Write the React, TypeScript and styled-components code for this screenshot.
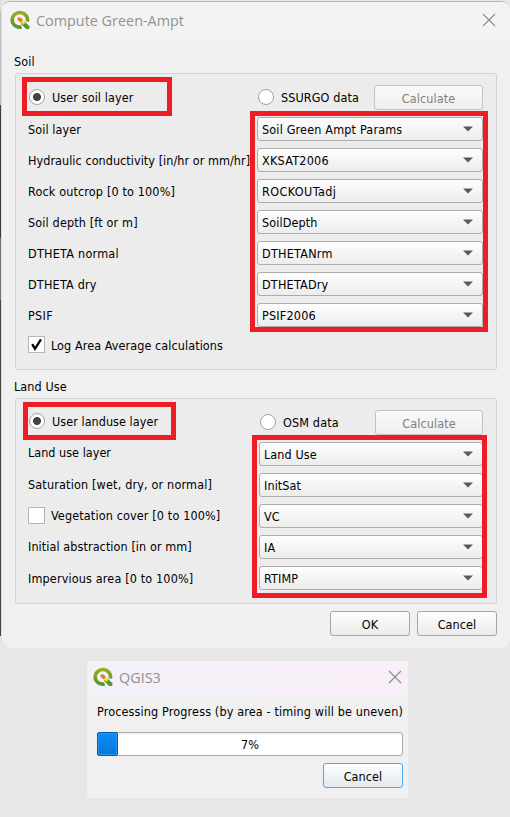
import React from 'react';
import styled, { createGlobalStyle } from 'styled-components';

const Global = createGlobalStyle`
  *, *::before, *::after { box-sizing: border-box; }
  body {
    margin: 0;
    background: #e7e7e7;
    font-family: "DejaVu Sans Condensed", "DejaVu Sans", sans-serif;
    font-size: 12.5px;
    line-height: 16px;
    color: #000;
  }
`;

const Desktop = styled.div`
  width: 510px;
  height: 817px;
  overflow: hidden;
  background: linear-gradient(#dcdcdc 0 12px, #bdbdbd 12px 105px, #3c3c3c 105px 238px, #777 238px 300px, #444 300px 636px, #e7e7e7 636px) 0 0 / 1px 100% no-repeat, #e7e7e7;
`;

const MainWindow = styled.div`
  height: 648px;
  margin: 0 0 0 1px;
  padding-top: 1px;
`;

const WindowBody = styled.div`
  display: flex;
  flex-direction: column;
  height: 647px;
  background: #f0f0f0;
  border-top: 1px solid #b4b4b4;
  border-left: 1px solid #dedede;
  border-radius: 9px;
  overflow: hidden;
`;

const TitleBar = styled.div<{ $tint?: boolean }>`
  display: flex;
  align-items: center;
  flex: none;
  height: ${p => (p.$tint ? 35 : 37)}px;
  padding: ${p => (p.$tint ? '0 6px 3px 6px' : '0 14px 1px 8px')};
  background: ${p => (p.$tint ? 'linear-gradient(90deg, #f3f0f8, #f8eef7)' : '#f3f3f3')};
`;

const Title = styled.div<{ $ls?: number }>`
  flex: 1;
  margin-left: 6px;
  padding-top: 1px;
  font: 14.4px/20px "Open Sans", sans-serif;
  letter-spacing: ${p => p.$ls ?? 0}px;
  color: #919191;
  white-space: nowrap;
`;

const Text = styled.span<{ $ls?: number }>`
  letter-spacing: ${p => p.$ls ?? 0.1}px;
  white-space: nowrap;
`;

const Section = styled.section<{ $gap: number }>`
  margin: ${p => p.$gap}px 13px 0 13px;
`;

const SectionTitle = styled.div`
  height: 20px;
  margin-left: -1px;
  padding-top: 1px;
`;

const Group = styled.div<{ $height: number }>`
  position: relative;
  height: ${p => p.$height}px;
  padding-left: 12px;
  padding-right: 13px;
  border: 1px solid #d3d3d3;
  border-radius: 2px;
  background: #ececec;
`;

const SourceRow = styled.div<{ $option: number; $button: number }>`
  display: grid;
  grid-template-columns: ${p => p.$option}px 1fr ${p => p.$button}px;
  align-items: center;
  height: 43px;
  padding-top: 4px;
`;

const Option = styled.label<{ $lift?: number }>`
  display: flex;
  align-items: center;
  gap: 7px;
  height: 19px;
  margin-bottom: ${p => p.$lift ?? 1}px;
  padding-left: 1px;
`;

const OptionText = styled(Text)`
  padding-top: 2px;
`;

const Radio = styled.span<{ $on?: boolean }>`
  width: 16px;
  height: 16px;
  flex: none;
  border: 1px solid #a3a3a3;
  border-radius: 50%;
  background: ${p => (p.$on ? 'radial-gradient(circle, #444 0 3.6px, #fff 4.4px)' : '#fff')};
`;

const Check = styled.span`
  display: flex;
  align-items: center;
  justify-content: center;
  flex: none;
  width: 17px;
  height: 17px;
  border: 1px solid #b5b5b5;
  background: #fff;
`;

const FieldRow = styled.div<{ $combo: number }>`
  display: grid;
  grid-template-columns: 1fr ${p => p.$combo}px;
  align-items: center;
  height: 24px;
  margin-bottom: 7px;
`;

const FieldLabel = styled.div<{ $top: number; $bottom: number }>`
  display: flex;
  align-items: center;
  gap: 6px;
  min-width: 0;
  padding: ${p => p.$top}px 0 ${p => p.$bottom}px;
`;

const Combo = styled.div`
  display: flex;
  align-items: center;
  justify-content: space-between;
  height: 24px;
  padding: 0 8px 0 4px;
  border: 1px solid #acacac;
  border-radius: 3px;
  background: linear-gradient(#fefefe, #ececec);
`;

const ComboValue = styled(Text)`
  padding-top: 2px;
`;

const Button = styled.button<{ $w: number; $tone?: 'disabled' | 'focus' }>`
  width: ${p => p.$w}px;
  height: 25px;
  padding: 3px 0 0;
  border: 1px solid ${p => (p.$tone === 'focus' ? '#4aa9f5' : p.$tone === 'disabled' ? '#c3c3c3' : '#a6a6a6')};
  border-radius: 3px;
  background: ${p =>
    p.$tone === 'focus'
      ? 'linear-gradient(#fdfefe, #e3e9ee)'
      : p.$tone === 'disabled'
        ? 'linear-gradient(#f9f9f9, #efefef)'
        : 'linear-gradient(#fefefe, #ebebeb)'};
  color: ${p => (p.$tone === 'disabled' ? '#808080' : '#000')};
  font: inherit;
  line-height: 16px;
`;

const CheckRow = styled.div`
  display: flex;
  align-items: center;
  gap: 6px;
  height: 17px;
  margin-top: 9px;
`;

const CheckLabel = styled(Text)`
  padding-top: 2px;
`;

/* Red annotation frame laid over the form controls. */
const Highlight = styled.div<{ $x: number; $y: number; $w: number; $h: number }>`
  position: absolute;
  left: ${p => p.$x}px;
  top: ${p => p.$y}px;
  width: ${p => p.$w}px;
  height: ${p => p.$h}px;
  border: 5px solid #ee1c24;
  pointer-events: none;
`;

const Footer = styled.div`
  display: flex;
  justify-content: flex-end;
  gap: 7px;
  padding: 7px 13px 0 0;
`;

const ProgressWindow = styled.div`
  width: 321px;
  height: 137px;
  margin: 13px 0 0 87px;
  background: #f0f0f0;
`;

const ProgressBody = styled.div`
  display: flex;
  flex-direction: column;
  padding: 8px 5px 0 10px;
`;

const Track = styled.div`
  display: grid;
  align-items: center;
  height: 24px;
  margin: 12px 0 7px;
  border: 1px solid #a8a8a8;
  border-radius: 3px;
  background: linear-gradient(#ededed, #fff 2px);
`;

const Chunk = styled.div`
  grid-area: 1 / 1;
  width: 21px;
  height: 24px;
  margin: -1px;
  border: 1px solid #0a5a9e;
  border-radius: 2px;
  box-shadow: inset 0 0 0 1px #2a94ee;
  background: linear-gradient(#0c8cf8, #0678d6);
`;

const Percent = styled.div`
  grid-area: 1 / 1;
  padding-top: 2px;
  text-align: center;
`;

const ProgressActions = styled.div`
  display: flex;
  justify-content: flex-end;
`;

const QgisIcon = () => (
  <svg width="20" height="20" viewBox="0 0 20 20">
    <defs>
      <linearGradient id="leaf" x1="0" y1="0" x2="0" y2="1">
        <stop offset="0" stopColor="#93b023" />
        <stop offset="1" stopColor="#589632" />
      </linearGradient>
    </defs>
    <path d="M11.6 16.9A7.7 7.3 0 1 1 17.3 11.6" fill="none" stroke="url(#leaf)" strokeWidth="3.6" />
    <path d="M11.2 11.2h3.2l5 5v2.9h-3.3l-5-5z" fill="#589632" />
    <path d="M10.4 10.2h2.6l2.4 2.4-1.9 2.2-3.1-2.6z" fill="#f0e64a" />
    <path d="M7.6 7.5h3l2.2 2.3-1.9 2.7-3.3-2.5z" fill="#ee7913" />
  </svg>
);

const CloseIcon = () => (
  <svg width="14" height="14" viewBox="0 0 14 14">
    <path d="M1 1l12 12M13 1L1 13" stroke="#8c8c8c" strokeWidth="1.15" fill="none" />
  </svg>
);

const Arrow = () => (
  <svg width="12" height="6" viewBox="0 0 12 6">
    <path d="M1 .5h10L6 5.6z" fill="#5a5a5a" />
  </svg>
);

const Tick = () => (
  <svg width="13" height="13" viewBox="0 0 13 13">
    <path d="M2.2 6.1L5 10.8L11 1.4" stroke="#000" strokeWidth="2.3" fill="none" />
  </svg>
);

type Field = {
  label: string;
  value: string;
  ls?: number;
  vls?: number;
  check?: boolean;
  top?: number;
  bottom?: number;
};

const soilFields: Field[] = [
  { label: 'Soil layer', value: 'Soil Green Ampt Params', vls: 0.17, top: 2 },
  { label: 'Hydraulic conductivity [in/hr or mm/hr]', value: 'XKSAT2006', ls: 0.05, vls: 0.25, top: 2 },
  { label: 'Rock outcrop [0 to 100%]', value: 'ROCKOUTadj', ls: 0.15, vls: 0.4, top: 2 },
  { label: 'Soil depth [ft or m]', value: 'SoilDepth', ls: 0.15, top: 2 },
  { label: 'DTHETA normal', value: 'DTHETANrm', ls: 0.25, vls: 0.25, top: 2 },
  { label: 'DTHETA dry', value: 'DTHETADry', ls: 0.2, vls: 0.2, top: 2 },
  { label: 'PSIF', value: 'PSIF2006', ls: 0.3, vls: 0.2, top: 2 },
];

const landFields: Field[] = [
  { label: 'Land use layer', value: 'Land Use', ls: 0.02, bottom: 2 },
  { label: 'Saturation [wet, dry, or normal]', value: 'InitSat', ls: 0.17 },
  { label: 'Vegetation cover [0 to 100%]', value: 'VC', check: true, ls: 0.14, bottom: 1 },
  { label: 'Initial abstraction [in or mm]', value: 'IA', ls: 0.08 },
  { label: 'Impervious area [0 to 100%]', value: 'RTIMP', ls: 0.15, top: 2 },
];

const Fields = ({ items, combo }: { items: Field[]; combo: number }) => (
  <>
    {items.map(f => (
      <FieldRow key={f.label} $combo={combo}>
        <FieldLabel $top={f.top ?? 0} $bottom={f.bottom ?? 0}>
          {f.check && <Check />}
          <Text $ls={f.ls}>{f.label}</Text>
        </FieldLabel>
        <Combo>
          <ComboValue $ls={f.vls}>{f.value}</ComboValue>
          <Arrow />
        </Combo>
      </FieldRow>
    ))}
  </>
);

export default function App() {
  return (
    <Desktop>
      <Global />
      <MainWindow>
        <WindowBody>
          <TitleBar>
            <QgisIcon />
            <Title>Compute Green-Ampt</Title>
            <CloseIcon />
          </TitleBar>

          <Section $gap={14}>
            <SectionTitle><Text>Soil</Text></SectionTitle>
            <Group $height={297}>
              <SourceRow $option={229} $button={109}>
                <Option><Radio $on /><OptionText>User soil layer</OptionText></Option>
                <Option><Radio /><OptionText>SSURGO data</OptionText></Option>
                <Button $w={109} $tone="disabled"><Text>Calculate</Text></Button>
              </SourceRow>
              <Fields items={soilFields} combo={226} />
              <CheckRow>
                <Check><Tick /></Check>
                <CheckLabel $ls={0.08}>Log Area Average calculations</CheckLabel>
              </CheckRow>
              <Highlight $x={6} $y={3} $w={150} $h={39} />
              <Highlight $x={234} $y={37} $w={238} $h={221} />
            </Group>
          </Section>

          <Section $gap={8}>
            <SectionTitle><Text>Land Use</Text></SectionTitle>
            <Group $height={206}>
              <SourceRow $option={231} $button={108}>
                <Option $lift={3}><Radio $on /><OptionText $ls={0.05}>User landuse layer</OptionText></Option>
                <Option><Radio /><OptionText $ls={0.15}>OSM data</OptionText></Option>
                <Button $w={108} $tone="disabled"><Text>Calculate</Text></Button>
              </SourceRow>
              <Fields items={landFields} combo={224} />
              <Highlight $x={7} $y={3} $w={153} $h={38} />
              <Highlight $x={236} $y={36} $w={235} $h={163} />
            </Group>
          </Section>

          <Footer>
            <Button $w={80}><Text>OK</Text></Button>
            <Button $w={80}><Text>Cancel</Text></Button>
          </Footer>
        </WindowBody>
      </MainWindow>

      <ProgressWindow>
        <TitleBar $tint>
          <QgisIcon />
          <Title>QGIS3</Title>
          <CloseIcon />
        </TitleBar>
        <ProgressBody>
          <Text $ls={0.14}>Processing Progress (by area - timing will be uneven)</Text>
          <Track>
            <Chunk />
            <Percent><Text>7%</Text></Percent>
          </Track>
          <ProgressActions>
            <Button $w={80} $tone="focus"><Text>Cancel</Text></Button>
          </ProgressActions>
        </ProgressBody>
      </ProgressWindow>
    </Desktop>
  );
}
